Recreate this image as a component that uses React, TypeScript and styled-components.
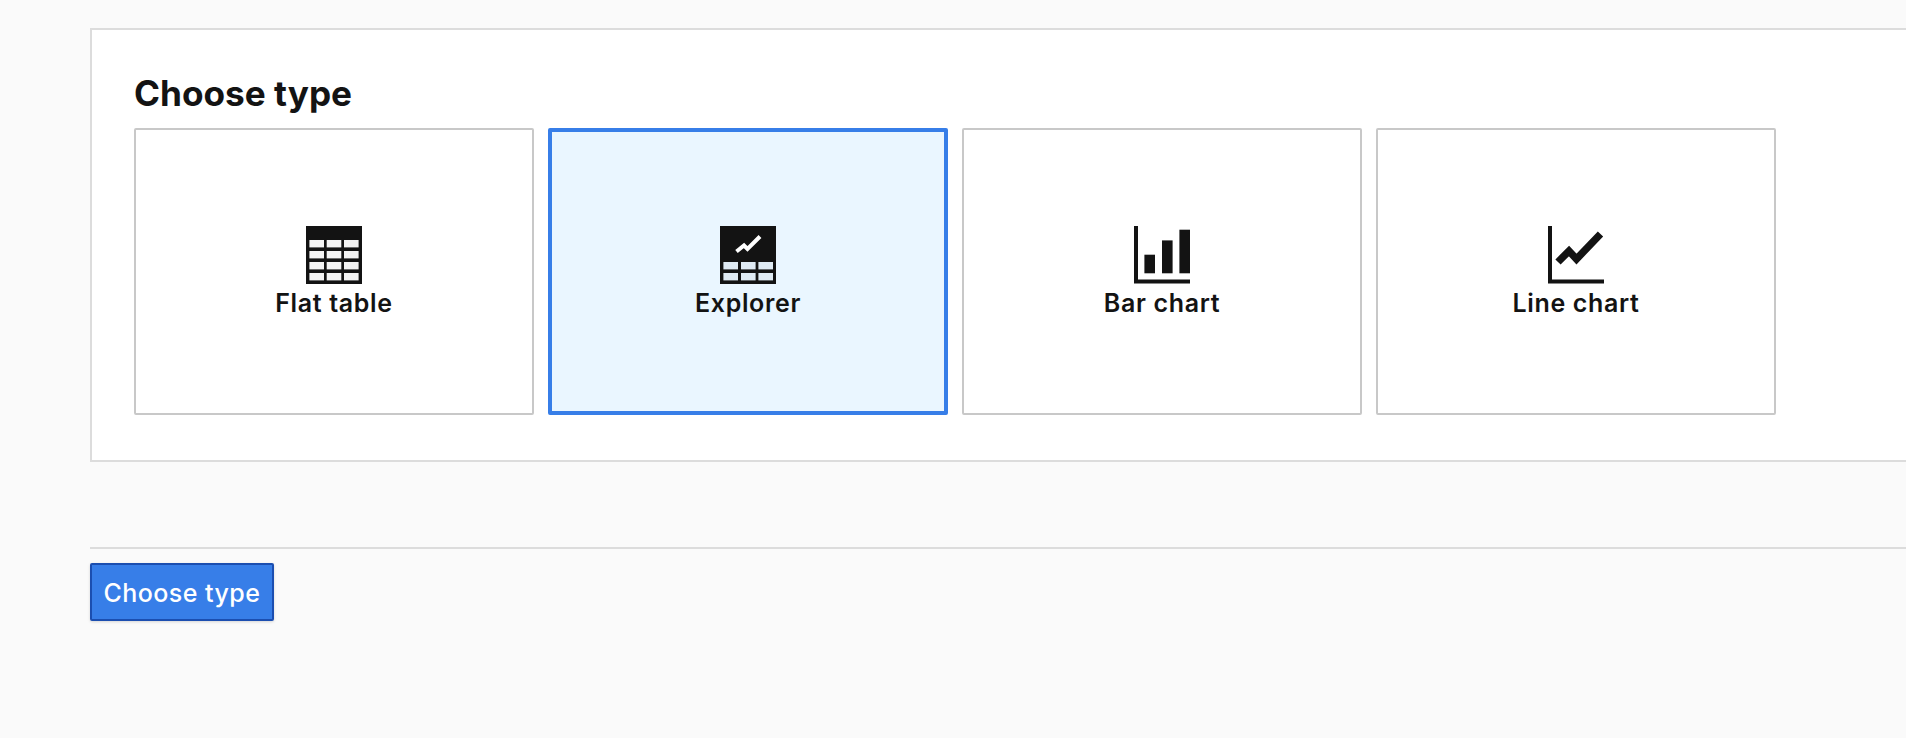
import styled, { createGlobalStyle } from 'styled-components';

const GlobalStyle = createGlobalStyle`
  html,
  body {
    margin: 0;
    height: 100%;
    overflow: hidden;
    background: #fafafa;
    font-family: Inter, "Liberation Sans", sans-serif;
    color: #131313;
  }
`;

const INK = '#131313';

const FlatTableIcon = () => {
  const rows = [14, 25, 36, 47];
  const cols = [3.4, 20.7, 38];
  return (
    <svg width="56" height="58" viewBox="0 0 56 58">
      <rect width="56" height="58" fill={INK} />
      {rows.map((y) =>
        cols.map((x) => <rect key={`${x}-${y}`} x={x} y={y} width="14.6" height="7.4" fill="#fff" opacity="0.95" />),
      )}
    </svg>
  );
};

const ExplorerIcon = () => {
  const rows = [36, 47];
  const cols = [3.4, 21, 38.4];
  return (
    <svg width="56" height="58" viewBox="0 0 56 58">
      <rect width="56" height="58" fill={INK} />
      <polyline points="16.5,25.5 24,19.5 27.5,23 40,10.5" fill="none" stroke="#fff" strokeWidth="4" />
      {rows.map((y) =>
        cols.map((x) => <rect key={`${x}-${y}`} x={x} y={y} width="14.6" height="7.4" fill="#eaf6ff" opacity="0.95" />),
      )}
    </svg>
  );
};

const BarChartIcon = () => (
  <svg width="56" height="58" viewBox="0 0 56 58">
    <path d="M0 0h4v53.5h52v4H0z" fill={INK} />
    <rect x="10.4" y="28.7" width="10.6" height="18.6" fill={INK} />
    <rect x="28" y="14.4" width="10.6" height="32.9" fill={INK} />
    <rect x="45.4" y="3.7" width="10.6" height="43.6" fill={INK} />
  </svg>
);

const LineChartIcon = () => (
  <svg width="56" height="58" viewBox="0 0 56 58">
    <path d="M0 0h4v53.5h52v4H0z" fill={INK} />
    <polyline points="10,36 21,25 28.5,33 52.5,8" fill="none" stroke={INK} strokeWidth="7.4" />
  </svg>
);

const CHART_TYPES = [
  { id: 'flat', label: 'Flat table', Icon: FlatTableIcon },
  { id: 'explorer', label: 'Explorer', Icon: ExplorerIcon },
  { id: 'bar', label: 'Bar chart', Icon: BarChartIcon },
  { id: 'line', label: 'Line chart', Icon: LineChartIcon },
];

export default function App() {
  return (
    <>
      <GlobalStyle />
      <Page>
        <Panel>
          <Title>Choose type</Title>
          <TypeGrid>
            {CHART_TYPES.map(({ id, label, Icon }) => (
              <TypeCard key={id} $selected={id === 'explorer'}>
                <Icon />
                <TypeLabel>{label}</TypeLabel>
              </TypeCard>
            ))}
          </TypeGrid>
        </Panel>
        <Footer>
          <SubmitButton>Choose type</SubmitButton>
        </Footer>
      </Page>
    </>
  );
}

const Page = styled.main`
  width: 1920px;
  padding: 28px 0 0 90px;
  box-sizing: border-box;
`;

const Panel = styled.section`
  box-sizing: border-box;
  height: 433.5px;
  padding: 42px 42px 0;
  background: #fff;
  border: 2px solid #dcdcdc;
  border-right: 0;
`;

const Title = styled.h1`
  margin: 0 0 14px;
  font-size: 35.2px;
  line-height: 42px;
  font-weight: 700;
`;

const TypeGrid = styled.div`
  display: flex;
  gap: 14px;
`;

const TypeCard = styled.button<{ $selected: boolean }>`
  box-sizing: border-box;
  width: 400px;
  height: 287px;
  padding: 3px 0 0;

  display: flex;
  flex-direction: column;
  align-items: center;
  justify-content: center;

  font-family: inherit;
  color: inherit;
  background: ${({ $selected }) => ($selected ? '#eaf6ff' : '#fff')};
  border: ${({ $selected }) => ($selected ? '4px solid #377ee8' : '2px solid #c8c8c8')};
  border-radius: 2px;

  svg {
    display: block;
  }
`;

const TypeLabel = styled.span`
  margin-top: 1px;
  font-size: 25px;
  line-height: 36px;
  font-weight: 600;
  letter-spacing: 0.65px;
`;

const Footer = styled.footer`
  margin-top: 85.5px;
  padding-top: 14px;
  border-top: 2px solid #dcdcdc;
`;

const SubmitButton = styled.button`
  box-sizing: border-box;
  height: 58px;
  padding: 1px 11.5px 0;

  font-family: inherit;
  font-size: 25px;
  font-weight: 500;
  letter-spacing: 0.45px;
  color: #fff;
  background: #377ee8;
  border: 2px solid #1b4eb0;
  border-radius: 2px;
  box-shadow: 0 1px 3px rgba(0, 0, 0, 0.15);
`;
